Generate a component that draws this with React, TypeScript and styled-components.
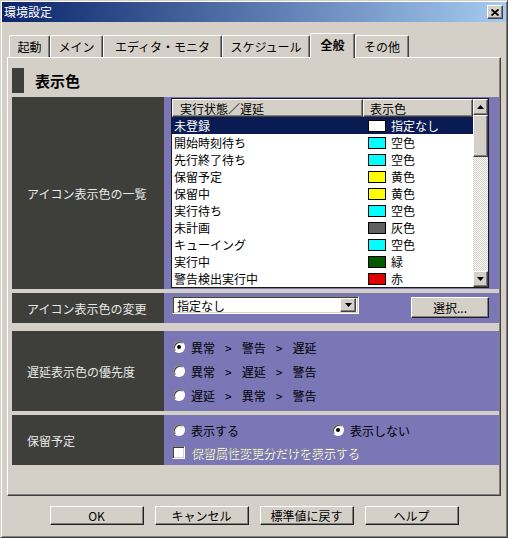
import React from 'react';
import styled, { createGlobalStyle, css } from 'styled-components';

const Global = createGlobalStyle`
  html, body { margin: 0; padding: 0; background: #d4d0c8; }
  body {
    font-family: "Noto Sans CJK JP", "Noto Sans", sans-serif;
    font-size: 12px;
    color: #000;
  }
  * { box-sizing: border-box; }
`;

const raised = css`
  border: 1px solid;
  border-color: #fff #404040 #404040 #fff;
  box-shadow: inset -1px -1px #808080;
  background: #d4d0c8;
`;

const sunken = css`
  border: 1px solid;
  border-color: #808080 #fff #fff #808080;
  box-shadow: inset 1px 1px #404040, inset -1px -1px #d4d0c8;
`;

const Window = styled.div`
  width: 508px;
  height: 538px;
  background: #d4d0c8;
  border: 1px solid;
  border-color: #d4d0c8 #404040 #404040 #d4d0c8;
  box-shadow: inset 1px 1px #fff, inset -1px -1px #808080;
  padding: 1px;
  display: flex;
  flex-direction: column;
`;

const TitleBar = styled.div`
  height: 20px;
  background: linear-gradient(to right, #0a246a, #a6caf0);
  display: flex;
  align-items: center;
  justify-content: space-between;
  padding: 0 3px 0 2px;
  color: #fff;
  font-size: 12px;
  line-height: 1;
`;

const CloseButton = styled.div`
  ${raised};
  width: 16px;
  height: 14px;
  display: flex;
  align-items: center;
  justify-content: center;
`;

const TabRow = styled.div`
  margin-top: 11px;
  height: 24px;
  display: flex;
  align-items: flex-end;
  padding-left: 7px;
`;

const Tab = styled.div<{ $w: number; $active?: boolean }>`
  width: ${(p) => p.$w}px;
  height: ${(p) => (p.$active ? 25 : 22)}px;
  margin-bottom: ${(p) => (p.$active ? -1 : 0)}px;
  position: relative;
  z-index: ${(p) => (p.$active ? 2 : 0)};
  background: #d4d0c8;
  border-top: 1px solid #fff;
  border-left: 1px solid #fff;
  border-right: 1px solid #404040;
  box-shadow: inset -1px 0 #808080;
  border-radius: 2px 2px 0 0;
  display: flex;
  align-items: ${(p) => (p.$active ? 'flex-start' : 'center')};
  padding-top: ${(p) => (p.$active ? 4 : 0)}px;
  justify-content: center;
  font-weight: ${(p) => (p.$active ? 700 : 400)};
  font-size: 12px;
  line-height: 14px;
  white-space: nowrap;
`;

const Panel = styled.div`
  margin-left: 5px;
  width: 494px;
  height: 439px;
  border-top: 1px solid #fff;
  border-left: 1px solid #fff;
  border-right: 1px solid #404040;
  border-bottom: 1px solid #404040;
  box-shadow: inset -1px -1px #808080;
  padding: 10px 1px 0 4px;
  display: flex;
  flex-direction: column;
`;

const Header = styled.div`
  height: 25px;
  display: flex;
  align-items: center;
  gap: 11px;
`;

const HeaderMark = styled.div`
  width: 12px;
  height: 25px;
  background: #3e3f3b;
`;

const HeaderTitle = styled.div`
  font-size: 15px;
  font-weight: 700;
  line-height: 1;
`;

const Section = styled.div<{ $h: number; $mt: number }>`
  display: grid;
  grid-template-columns: 152px 1fr;
  height: ${(p) => p.$h}px;
  margin-top: ${(p) => p.$mt}px;
`;

const Label = styled.div`
  background: #3e3f3b;
  color: #e8e8e8;
  display: flex;
  align-items: center;
  padding-left: 15px;
  font-size: 12px;
`;

const Cell = styled.div`
  background: #7b76b6;
  min-width: 0;
`;

const ListCell = styled(Cell)`
  padding: 1px 0 0 7px;
`;

const ListBox = styled.div`
  width: 318px;
  height: 190px;
  border: 1px solid #1a1a1a;
  background: #fff;
  display: flex;
`;

const ListMain = styled.div`
  width: 301px;
  display: flex;
  flex-direction: column;
`;

const HeaderRow = styled.div`
  display: flex;
  height: 18px;
`;

const HeaderCell = styled.div<{ $w: number; $pl: number }>`
  ${raised};
  width: ${(p) => p.$w}px;
  padding-left: ${(p) => p.$pl}px;
  display: flex;
  align-items: center;
  font-size: 12px;
`;

const Row = styled.div<{ $sel?: boolean }>`
  display: flex;
  height: 17px;
  background: ${(p) => (p.$sel ? '#0a1a52' : '#fff')};
  color: ${(p) => (p.$sel ? '#fff' : '#000')};
  font-size: 12px;
`;

const NameCell = styled.div`
  width: 191px;
  padding-left: 2px;
  display: flex;
  align-items: center;
  white-space: nowrap;
`;

const ColorCell = styled.div`
  width: 110px;
  padding-left: 5px;
  display: flex;
  align-items: center;
  gap: 5px;
`;

const Swatch = styled.span<{ $c: string }>`
  width: 18px;
  height: 12px;
  background: ${(p) => p.$c};
  border: 1px solid #000;
`;

const ScrollBar = styled.div`
  width: 15px;
  display: flex;
  flex-direction: column;
  background: repeating-conic-gradient(#fff 0 25%, #d4d0c8 0 50%) 0 0 / 2px 2px;
`;

const ScrollButton = styled.div`
  ${raised};
  height: 16px;
  display: flex;
  align-items: center;
  justify-content: center;
`;

const Thumb = styled.div`
  ${raised};
  height: 42px;
`;

const Spacer = styled.div`
  flex: 1;
`;

const ChangeCell = styled(Cell)`
  display: flex;
  align-items: flex-start;
  justify-content: space-between;
  padding: 3px 10px 0 8px;
`;

const Dropdown = styled.div`
  ${sunken};
  background: #fff;
  width: 187px;
  height: 18px;
  display: flex;
  align-items: center;
  justify-content: space-between;
  padding: 2px 2px 2px 4px;
  font-size: 12px;
`;

const DropButton = styled.div`
  ${raised};
  width: 16px;
  height: 14px;
  display: flex;
  align-items: center;
  justify-content: center;
`;

const Button = styled.div<{ $w: number; $h: number }>`
  width: ${(p) => p.$w}px;
  height: ${(p) => p.$h}px;
  border: 1px solid;
  border-color: #fff #202020 #202020 #fff;
  box-shadow: inset -1px -1px #808080;
  background: #d4d0c8;
  display: flex;
  align-items: center;
  justify-content: center;
  font-size: 12px;
  white-space: nowrap;
`;

const SelectButton = styled(Button)`
  margin-top: 1px;
`;

const OptionStack = styled(Cell)<{ $gap: number; $pt: number; $center?: boolean }>`
  display: flex;
  flex-direction: column;
  justify-content: ${(p) => (p.$center ? 'center' : 'flex-start')};
  gap: ${(p) => p.$gap}px;
  padding: ${(p) => p.$pt}px 0 0 9px;
`;

const OptionRow = styled.div`
  display: flex;
  align-items: center;
  height: 16px;
`;

const OptionItem = styled.label<{ $w?: number }>`
  display: flex;
  align-items: center;
  gap: 6px;
  width: ${(p) => (p.$w ? `${p.$w}px` : 'auto')};
  font-size: 12px;
`;

const Radio = styled.span<{ $on?: boolean }>`
  width: 12px;
  height: 12px;
  border-radius: 50%;
  background: #fff;
  border: 1px solid;
  border-color: #808080 #fff #fff #808080;
  box-shadow: inset 1px 1px #404040;
  display: flex;
  align-items: center;
  justify-content: center;
  &::after {
    content: '';
    width: 4px;
    height: 4px;
    border-radius: 50%;
    background: #000;
    display: ${(p) => (p.$on ? 'block' : 'none')};
  }
`;

const Order = styled.span`
  display: flex;
  gap: 10px;
`;

const Checkbox = styled.span`
  ${sunken};
  width: 13px;
  height: 13px;
  background: #fff;
  margin-left: -1px;
`;

const DisabledText = styled.span`
  color: #8a8a8a;
  text-shadow: 1px 1px #fff;
`;

const ButtonRow = styled.div`
  margin-top: 10px;
  display: flex;
  justify-content: center;
  gap: 11px;
`;

const Up = () => (
  <svg width="7" height="4" viewBox="0 0 7 4">
    <polygon points="3.5,0 7,4 0,4" fill="#000" />
  </svg>
);
const Down = () => (
  <svg width="7" height="4" viewBox="0 0 7 4">
    <polygon points="0,0 7,0 3.5,4" fill="#000" />
  </svg>
);

const rows: { name: string; color: string; label: string; sel?: boolean }[] = [
  { name: '未登録', color: '#ffffff', label: '指定なし', sel: true },
  { name: '開始時刻待ち', color: '#00ffff', label: '空色' },
  { name: '先行終了待ち', color: '#00ffff', label: '空色' },
  { name: '保留予定', color: '#ffff00', label: '黄色' },
  { name: '保留中', color: '#ffff00', label: '黄色' },
  { name: '実行待ち', color: '#00ffff', label: '空色' },
  { name: '未計画', color: '#606060', label: '灰色' },
  { name: 'キューイング', color: '#00ffff', label: '空色' },
  { name: '実行中', color: '#005a00', label: '緑' },
  { name: '警告検出実行中', color: '#e00000', label: '赤' },
];

const orders: { items: string[]; on?: boolean }[] = [
  { items: ['異常', '>', '警告', '>', '遅延'], on: true },
  { items: ['異常', '>', '遅延', '>', '警告'] },
  { items: ['遅延', '>', '異常', '>', '警告'] },
];

const tabs: { label: string; w: number; active?: boolean }[] = [
  { label: '起動', w: 41 },
  { label: 'メイン', w: 53 },
  { label: 'エディタ・モニタ', w: 119 },
  { label: 'スケジュール', w: 88 },
  { label: '全般', w: 45, active: true },
  { label: 'その他', w: 54 },
];

export default function App() {
  return (
    <>
      <Global />
      <Window>
        <TitleBar>
          <span>環境設定</span>
          <CloseButton>
            <svg width="8" height="7" viewBox="0 0 8 7">
              <path d="M0.5 0.5 L7.5 6.5 M7.5 0.5 L0.5 6.5" stroke="#000" strokeWidth="1.8" />
            </svg>
          </CloseButton>
        </TitleBar>
        <TabRow>
          {tabs.map((t) => (
            <Tab key={t.label} $w={t.w} $active={t.active}>
              {t.label}
            </Tab>
          ))}
        </TabRow>
        <Panel>
          <Header>
            <HeaderMark />
            <HeaderTitle>表示色</HeaderTitle>
          </Header>
          <Section $h={192} $mt={4}>
            <Label>アイコン表示色の一覧</Label>
            <ListCell>
              <ListBox>
                <ListMain>
                  <HeaderRow>
                    <HeaderCell $w={191} $pl={7}>実行状態／遅延</HeaderCell>
                    <HeaderCell $w={110} $pl={6}>表示色</HeaderCell>
                  </HeaderRow>
                  {rows.map((r) => (
                    <Row key={r.name} $sel={r.sel}>
                      <NameCell>{r.name}</NameCell>
                      <ColorCell>
                        <Swatch $c={r.color} />
                        {r.label}
                      </ColorCell>
                    </Row>
                  ))}
                </ListMain>
                <ScrollBar>
                  <ScrollButton>
                    <Up />
                  </ScrollButton>
                  <Thumb />
                  <Spacer />
                  <ScrollButton>
                    <Down />
                  </ScrollButton>
                </ScrollBar>
              </ListBox>
            </ListCell>
          </Section>
          <Section $h={30} $mt={4}>
            <Label>アイコン表示色の変更</Label>
            <ChangeCell>
              <Dropdown>
                <span>指定なし</span>
                <DropButton>
                  <Down />
                </DropButton>
              </Dropdown>
              <SelectButton $w={78} $h={21}>選択...</SelectButton>
            </ChangeCell>
          </Section>
          <Section $h={80} $mt={8}>
            <Label>遅延表示色の優先度</Label>
            <OptionStack $gap={8} $pt={0} $center>
              {orders.map((o, i) => (
                <OptionRow key={i}>
                  <OptionItem>
                    <Radio $on={o.on} />
                    <Order>
                      {o.items.map((it, j) => (
                        <span key={j}>{it}</span>
                      ))}
                    </Order>
                  </OptionItem>
                </OptionRow>
              ))}
            </OptionStack>
          </Section>
          <Section $h={50} $mt={4}>
            <Label>保留予定</Label>
            <OptionStack $gap={6} $pt={7}>
              <OptionRow>
                <OptionItem $w={159}>
                  <Radio />
                  表示する
                </OptionItem>
                <OptionItem>
                  <Radio $on />
                  表示しない
                </OptionItem>
              </OptionRow>
              <OptionRow>
                <OptionItem>
                  <Checkbox />
                  <DisabledText>保留属性変更分だけを表示する</DisabledText>
                </OptionItem>
              </OptionRow>
            </OptionStack>
          </Section>
        </Panel>
        <ButtonRow>
          <Button $w={94} $h={19}>OK</Button>
          <Button $w={94} $h={19}>キャンセル</Button>
          <Button $w={94} $h={19}>標準値に戻す</Button>
          <Button $w={94} $h={19}>ヘルプ</Button>
        </ButtonRow>
      </Window>
    </>
  );
}
